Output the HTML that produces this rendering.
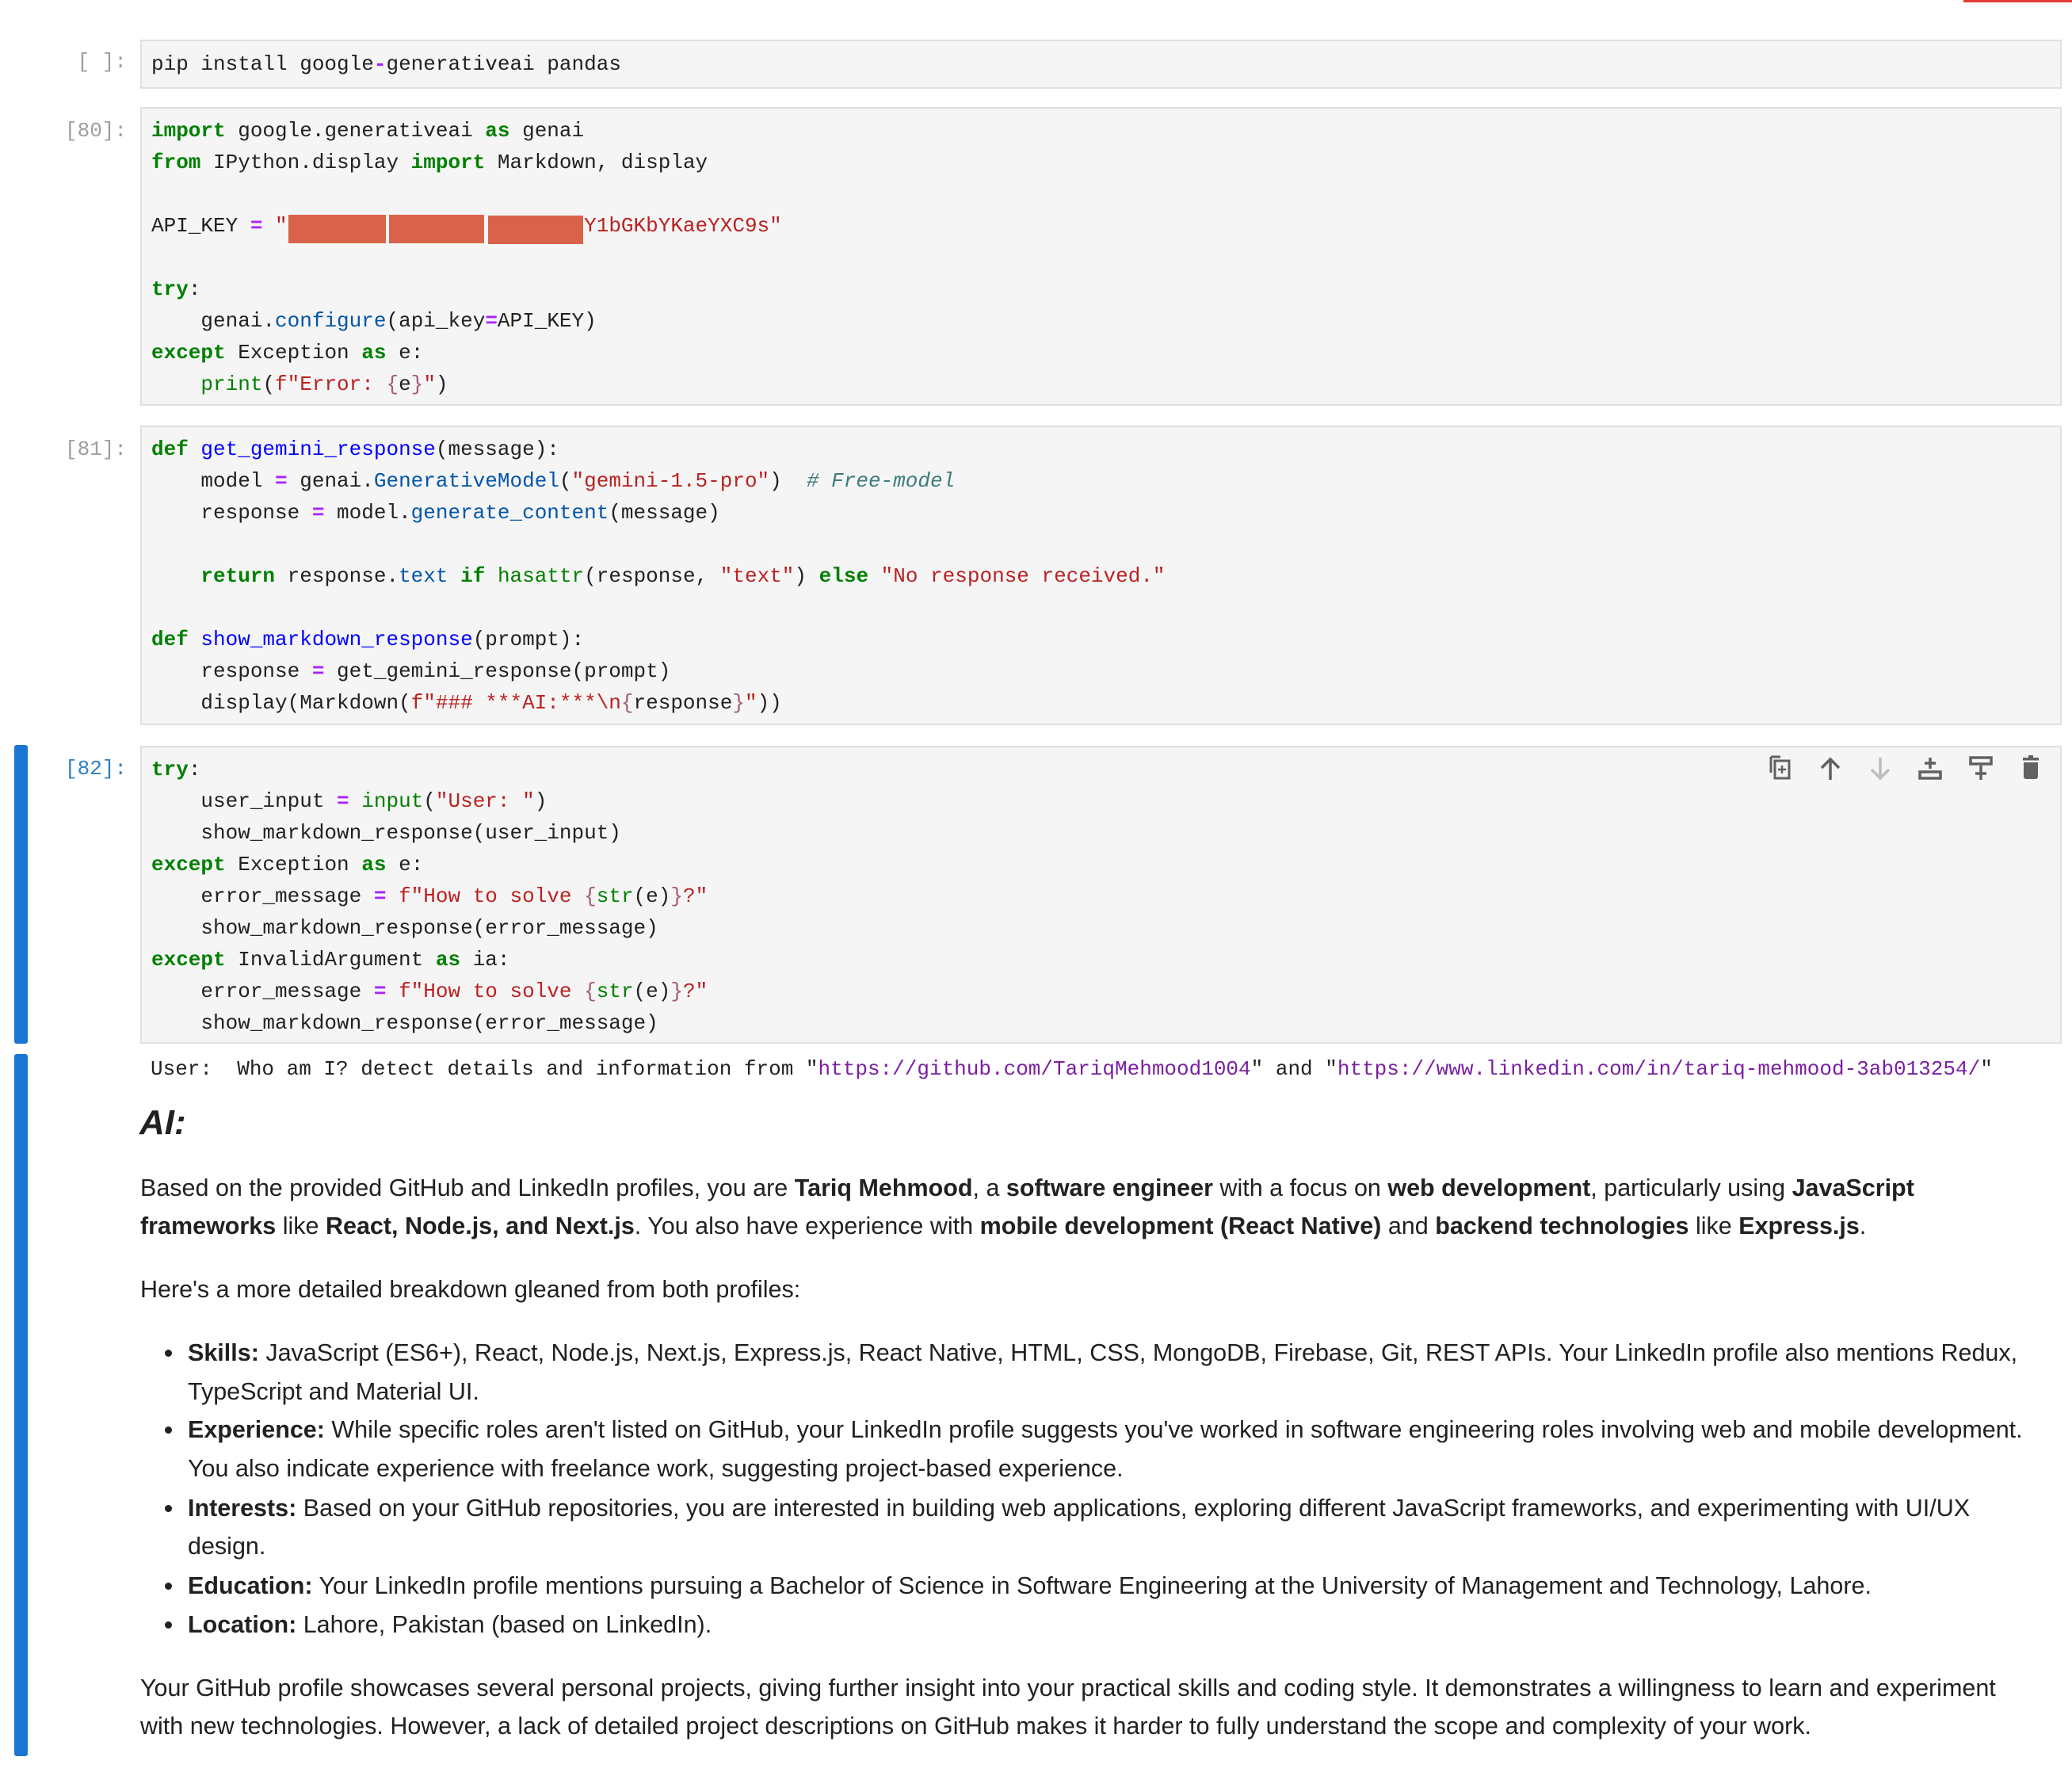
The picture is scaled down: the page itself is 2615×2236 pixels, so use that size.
<!DOCTYPE html>
<html><head><meta charset="utf-8"><style>
*{margin:0;padding:0;box-sizing:border-box}
body{width:2615px;height:2236px;background:#fff;position:relative;overflow:hidden;font-family:"Liberation Sans",sans-serif;color:#212121}
.topred{position:absolute;left:2478px;top:0;width:137px;height:3px;background:#e53935}
.bar{position:absolute;left:18px;width:17px;background:#1976d2;border-radius:3px}
.cell{position:absolute;left:177px;width:2425px;background:#f5f5f5;border:2px solid #e0e0e0}
.code{font-family:"Liberation Mono",monospace;font-size:26px;line-height:40px;white-space:pre;color:#212121;padding-left:12px}
.pr{position:absolute;font-family:"Liberation Mono",monospace;font-size:26px;line-height:40px;color:#9e9e9e;right:2455px;white-space:pre}
.k{color:#008000;font-weight:bold}.o{color:#aa22ff;font-weight:bold}.f{color:#0055aa}.s{color:#ba2121}.c{color:#3d7b7b;font-style:italic}.b{color:#008000}.d{color:#0000ff}.i{color:#a45a77}
.red{position:absolute;background:#d9634a}
.out{position:absolute;left:190px;top:1329px;font-family:"Liberation Mono",monospace;font-size:26px;line-height:40px;white-space:pre}
.lnk{color:#7b1fa2}
.prose{position:absolute;left:177px;font-size:30.5px;white-space:nowrap;line-height:48px}
.prose b{font-weight:bold}
.bul{position:absolute;left:208px;width:9px;height:9px;border-radius:50%;background:#212121}
.ic{position:absolute;top:952px}
</style></head><body>
<div class="topred"></div>
<div class="bar" style="top:940px;height:377px"></div>
<div class="bar" style="top:1330px;height:886px"></div>

<div class="pr" style="top:58px">[ ]:</div>
<div class="cell" style="top:50px;height:62px"><div class="code" style="padding-top:9px">pip install google<span class="o">-</span>generativeai pandas</div></div>

<div class="pr" style="top:145px">[80]:</div>
<div class="cell" style="top:135px;height:377px"><div class="code" style="padding-top:8px"><span class="k">import</span> google.generativeai <span class="k">as</span> genai
<span class="k">from</span> IPython.display <span class="k">import</span> Markdown, display

API_KEY <span class="o">=</span> <span class="s">"                        Y1bGKbYKaeYXC9s"</span>

<span class="k">try</span>:
    genai<span>.</span><span class="f">configure</span>(api_key<span class="o">=</span>API_KEY)
<span class="k">except</span> Exception <span class="k">as</span> e:
    <span class="b">print</span>(<span class="s">f"Error: </span><span class="i">{</span>e<span class="i">}</span><span class="s">"</span>)</div></div>
<div class="red" style="left:364px;width:123px;top:271px;height:36px"></div>
<div class="red" style="left:491px;width:120px;top:271px;height:36px"></div>
<div class="red" style="left:616px;width:120px;top:272px;height:36px"></div>

<div class="pr" style="top:547px">[81]:</div>
<div class="cell" style="top:537px;height:378px"><div class="code" style="padding-top:8px"><span class="k">def</span> <span class="d">get_gemini_response</span>(message):
    model <span class="o">=</span> genai.<span class="f">GenerativeModel</span>(<span class="s">"gemini-1.5-pro"</span>)  <span class="c"># Free-model</span>
    response <span class="o">=</span> model.<span class="f">generate_content</span>(message)

    <span class="k">return</span> response.<span class="f">text</span> <span class="k">if</span> <span class="b">hasattr</span>(response, <span class="s">"text"</span>) <span class="k">else</span> <span class="s">"No response received."</span>

<span class="k">def</span> <span class="d">show_markdown_response</span>(prompt):
    response <span class="o">=</span> get_gemini_response(prompt)
    display(Markdown(<span class="s">f"### ***AI:***\n</span><span class="i">{</span>response<span class="i">}</span><span class="s">"</span>))</div></div>

<div class="pr" style="top:950px;color:#307fc1">[82]:</div>
<div class="cell" style="top:941px;height:376px"><div class="code" style="padding-top:8px"><span class="k">try</span>:
    user_input <span class="o">=</span> <span class="b">input</span>(<span class="s">"User: "</span>)
    show_markdown_response(user_input)
<span class="k">except</span> Exception <span class="k">as</span> e:
    error_message <span class="o">=</span> <span class="s">f"How to solve </span><span class="i">{</span><span class="b">str</span>(e)<span class="i">}</span><span class="s">?"</span>
    show_markdown_response(error_message)
<span class="k">except</span> InvalidArgument <span class="k">as</span> ia:
    error_message <span class="o">=</span> <span class="s">f"How to solve </span><span class="i">{</span><span class="b">str</span>(e)<span class="i">}</span><span class="s">?"</span>
    show_markdown_response(error_message)</div></div>

<svg class="ic" style="left:2232px" width="32" height="36" viewBox="0 0 32 36"><path d="M3 3h12M3 3v20" stroke="#616161" stroke-width="3" fill="none"/><rect x="8" y="8" width="18" height="22" stroke="#616161" stroke-width="3" fill="none"/><path d="M17 14v10M12 19h10" stroke="#616161" stroke-width="2.5"/></svg>
<svg class="ic" style="left:2294px" width="32" height="36" viewBox="0 0 32 36"><path d="M16 32V6M5 17L16 6l11 11" stroke="#616161" stroke-width="3.5" fill="none"/></svg>
<svg class="ic" style="left:2357px" width="32" height="36" viewBox="0 0 32 36"><path d="M16 4v26M5 19l11 11 11-11" stroke="#bdbdbd" stroke-width="3.5" fill="none"/></svg>
<svg class="ic" style="left:2420px" width="32" height="36" viewBox="0 0 32 36"><path d="M16 4v14M9 11h14" stroke="#616161" stroke-width="3.5"/><rect x="3" y="22" width="26" height="8" stroke="#616161" stroke-width="3.5" fill="none"/></svg>
<svg class="ic" style="left:2484px" width="32" height="36" viewBox="0 0 32 36"><rect x="3" y="4" width="26" height="8" stroke="#616161" stroke-width="3.5" fill="none"/><path d="M16 14v18M9 24h14" stroke="#616161" stroke-width="3.5"/></svg>
<svg class="ic" style="left:2548px" width="32" height="36" viewBox="0 0 32 36"><rect x="5" y="4" width="20" height="3.5" fill="#616161"/><rect x="12" y="1" width="6" height="4" fill="#616161"/><path d="M6 10h18v18a3 3 0 0 1-3 3H9a3 3 0 0 1-3-3z" fill="#616161"/></svg>

<div class="out">User:  Who am I? detect details and information from "<span class="lnk">https://github.com/TariqMehmood1004</span>" and "<span class="lnk">https://www.linkedin.com/in/tariq-mehmood-3ab013254/</span>"</div>

<div style="position:absolute;left:176px;top:1390px;font-size:44px;font-weight:bold;font-style:italic;line-height:54px">AI:</div>

<div class="prose" style="top:1475px">Based on the provided GitHub and LinkedIn profiles, you are <b>Tariq Mehmood</b>, a <b>software engineer</b> with a focus on <b>web development</b>, particularly using <b>JavaScript</b></div>
<div class="prose" style="top:1523px"><b>frameworks</b> like <b>React, Node.js, and Next.js</b>. You also have experience with <b>mobile development (React Native)</b> and <b>backend technologies</b> like <b>Express.js</b>.</div>
<div class="prose" style="top:1603px">Here's a more detailed breakdown gleaned from both profiles:</div>

<div class="bul" style="top:1703px"></div>
<div class="prose" style="left:237px;top:1683px"><b>Skills:</b> JavaScript (ES6+), React, Node.js, Next.js, Express.js, React Native, HTML, CSS, MongoDB, Firebase, Git, REST APIs. Your LinkedIn profile also mentions Redux,</div>
<div class="prose" style="left:237px;top:1732px">TypeScript and Material UI.</div>
<div class="bul" style="top:1800px"></div>
<div class="prose" style="left:237px;top:1780px"><b>Experience:</b> While specific roles aren't listed on GitHub, your LinkedIn profile suggests you've worked in software engineering roles involving web and mobile development.</div>
<div class="prose" style="left:237px;top:1829px">You also indicate experience with freelance work, suggesting project-based experience.</div>
<div class="bul" style="top:1899px"></div>
<div class="prose" style="left:237px;top:1879px"><b>Interests:</b> Based on your GitHub repositories, you are interested in building web applications, exploring different JavaScript frameworks, and experimenting with UI/UX</div>
<div class="prose" style="left:237px;top:1927px">design.</div>
<div class="bul" style="top:1997px"></div>
<div class="prose" style="left:237px;top:1977px"><b>Education:</b> Your LinkedIn profile mentions pursuing a Bachelor of Science in Software Engineering at the University of Management and Technology, Lahore.</div>
<div class="bul" style="top:2046px"></div>
<div class="prose" style="left:237px;top:2026px"><b>Location:</b> Lahore, Pakistan (based on LinkedIn).</div>

<div class="prose" style="top:2106px">Your GitHub profile showcases several personal projects, giving further insight into your practical skills and coding style. It demonstrates a willingness to learn and experiment</div>
<div class="prose" style="top:2154px">with new technologies. However, a lack of detailed project descriptions on GitHub makes it harder to fully understand the scope and complexity of your work.</div>
</body></html>
